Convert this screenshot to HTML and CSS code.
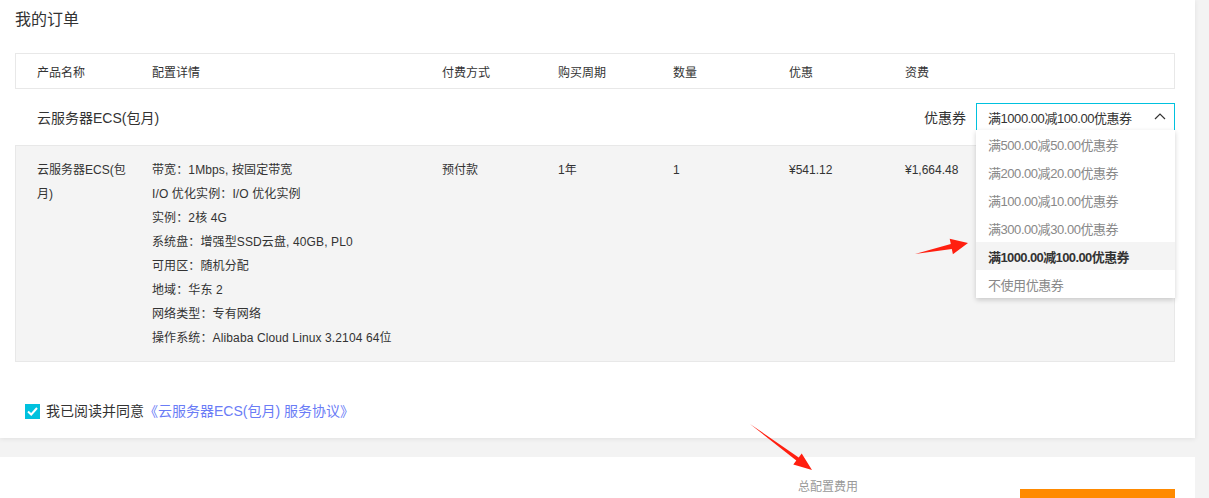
FILE: index.html
```html
<!DOCTYPE html>
<html lang="zh-CN">
<head>
<meta charset="utf-8">
<title>我的订单</title>
<link rel="stylesheet" href="styles.css">
</head>
<body>
<section class="order-card">
  <h2 class="page-title">我的订单</h2>
  <div class="table">
    <div class="table-head">
      <div class="cell">产品名称</div>
      <div class="cell">配置详情</div>
      <div class="cell">付费方式</div>
      <div class="cell">购买周期</div>
      <div class="cell">数量</div>
      <div class="cell">优惠</div>
      <div class="cell">资费</div>
    </div>
    <div class="group-row">
      <div class="group-name">云服务器ECS(包月)</div>
      <div class="coupon">
        <span class="coupon-label">优惠券</span>
        <div class="select">
          <span class="select-value">满1000.00减100.00优惠券</span>
          <svg class="chevron" width="12" height="8" viewBox="0 0 12 8"><polyline points="1,7 6,2 11,7" fill="none" stroke="#333" stroke-width="1.2"/></svg>
          <ul class="dropdown">
            <li class="option">满500.00减50.00优惠券</li>
            <li class="option">满200.00减20.00优惠券</li>
            <li class="option">满100.00减10.00优惠券</li>
            <li class="option">满300.00减30.00优惠券</li>
            <li class="option option-active">满1000.00减100.00优惠券</li>
            <li class="option">不使用优惠券</li>
          </ul>
        </div>
      </div>
    </div>
    <div class="detail-row">
      <div class="cell product">云服务器ECS(包月)</div>
      <div class="cell specs">
        <div>带宽：1Mbps, 按固定带宽</div>
        <div>I/O 优化实例：I/O 优化实例</div>
        <div>实例：2核 4G</div>
        <div>系统盘：增强型SSD云盘, 40GB, PL0</div>
        <div>可用区：随机分配</div>
        <div>地域：华东 2</div>
        <div>网络类型：专有网络</div>
        <div>操作系统：Alibaba Cloud Linux 3.2104 64位</div>
      </div>
      <div class="cell">预付款</div>
      <div class="cell">1年</div>
      <div class="cell">1</div>
      <div class="cell">¥541.12</div>
      <div class="cell">¥1,664.48</div>
    </div>
  </div>
  <div class="agree">
    <span class="checkbox"><svg width="15" height="15" viewBox="0 0 15 15"><polyline points="3,7.5 6.2,10.5 12,4" fill="none" stroke="#fff" stroke-width="2"/></svg></span>
    <span>我已阅读并同意</span>
    <a class="agree-link">《云服务器ECS(包月) 服务协议》</a>
  </div>
</section>
<section class="summary-card">
  <div class="fee">总配置费用</div>
  <div class="pay-btn"></div>
</section>
<svg class="annotations" width="1209" height="498" viewBox="0 0 1209 498">
  <polygon points="915,254 950.8,244 949.7,238.7 968,243 952.9,254.3 951.8,249" fill="#ff1f10"/>
  <polygon points="750,424 798.7,457.4 801.7,453.4 812,470 793.3,464.6 796.3,460.6" fill="#ff1f10"/>
</svg>
</body>
</html>
```
FILE: styles.css
```css
* { box-sizing: border-box; }
body {
  margin: 0;
  width: 1209px;
  height: 498px;
  overflow: hidden;
  position: relative;
  background: #f3f3f3;
  color: #333;
  font-family: "Liberation Sans", "Noto Sans CJK SC", sans-serif;
}
.order-card {
  width: 1195px;
  background: #fff;
  padding: 0 20px 17px 15px;
  box-shadow: 0 1px 5px rgba(0, 0, 0, 0.08);
  position: relative;
}
.page-title {
  margin: 0 0 13px;
  height: 40px;
  line-height: 40px;
  font-size: 16px;
  font-weight: normal;
  color: #333;
}
.table { width: 1160px; }
.table-head,
.detail-row {
  display: grid;
  grid-template-columns: 115px 290px 116px 115px 116px 116px 1fr;
}
.table-head {
  height: 36px;
  border: 1px solid #e8e8e8;
  align-items: center;
  font-size: 12px;
}
.cell { padding-left: 21px; }
.group-row {
  height: 56px;
  padding-left: 22px;
  display: flex;
  align-items: center;
  justify-content: space-between;
}
.group-name { font-size: 14px; }
.coupon {
  display: flex;
  align-items: center;
  gap: 10px;
  font-size: 14px;
}
.select {
  position: relative;
  width: 199px;
  height: 28px;
  border: 1px solid #00c1de;
  display: flex;
  align-items: center;
  justify-content: space-between;
  padding: 0 8px 0 11px;
  font-size: 13px;
}
.select-value { letter-spacing: -0.45px; }
.chevron { margin-top: -2px; }
.dropdown {
  position: absolute;
  top: 100%;
  left: -1px;
  width: 199px;
  margin: 0;
  padding: 0;
  list-style: none;
  background: #fff;
  box-shadow: 0 2px 5px rgba(0, 0, 0, 0.18);
  z-index: 5;
}
.option {
  height: 28px;
  padding-top: 2px;
  line-height: 28px;
  padding-left: 12px;
  color: #888;
  white-space: nowrap;
  overflow: hidden;
  letter-spacing: -0.45px;
}
.option-active {
  background: #f4f4f4;
  color: #333;
  font-weight: bold;
  letter-spacing: -0.6px;
}
.detail-row {
  background: #f4f4f4;
  border: 1px solid #e8e8e8;
  padding: 12px 0 11px;
  font-size: 12px;
  line-height: 24px;
}
.specs { letter-spacing: 0.12px; }
.product { padding-right: 0; }
.agree {
  display: flex;
  align-items: center;
  margin: 39px 0 0 10px;
  font-size: 14px;
  line-height: 20px;
}
.checkbox {
  width: 15px;
  height: 15px;
  background: #00c1de;
  margin-right: 6px;
  display: flex;
}
.agree-link { color: #6a7cf6; }
.summary-card {
  width: 1195px;
  height: 60px;
  margin-top: 19px;
  background: #fff;
  display: flex;
  justify-content: flex-end;
  align-items: flex-start;
  padding-right: 20px;
}
.fee {
  width: 222px;
  padding-top: 21px;
  font-size: 12px;
  line-height: 18px;
  color: #999;
}
.pay-btn {
  width: 155px;
  height: 40px;
  margin-top: 32px;
  background: #ff8a00;
}
.annotations {
  position: absolute;
  left: 0;
  top: 0;
  pointer-events: none;
  z-index: 10;
}
```
